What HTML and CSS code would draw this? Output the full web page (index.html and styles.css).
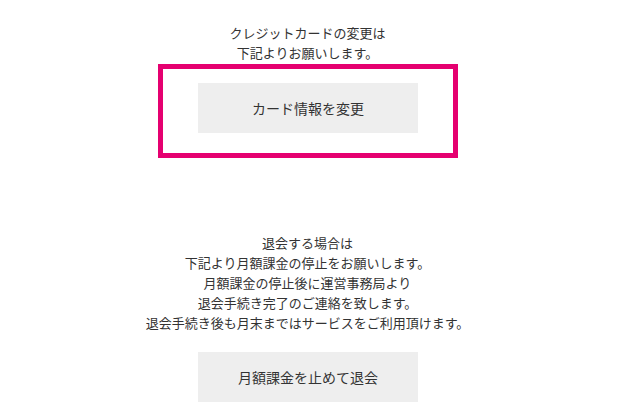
FILE: index.html
```html
<!DOCTYPE html>
<html lang="ja">
<head>
<meta charset="utf-8">
<link rel="stylesheet" href="styles.css">
</head>
<body>
<div class="page">
  <section class="card-section">
    <p class="note">クレジットカードの変更は<br>下記よりお願いします。</p>
    <div class="highlight">
      <a class="btn">カード情報を変更</a>
    </div>
  </section>
  <section class="quit-section">
    <p class="note">退会する場合は<br>下記より月額課金の停止をお願いします。<br>月額課金の停止後に運営事務局より<br>退会手続き完了のご連絡を致します。<br>退会手続き後も月末まではサービスをご利用頂けます。</p>
    <a class="btn btn-quit">月額課金を止めて退会</a>
  </section>
</div>
</body>
</html>
```

FILE: styles.css
```css
html, body {
  margin: 0;
  padding: 0;
  background: #fff;
}
body {
  font-family: "Noto Sans CJK JP", "Noto Sans", sans-serif;
  color: #333;
}
.page {
  width: 615px;
  display: flex;
  flex-direction: column;
  align-items: center;
}
.card-section, .quit-section {
  display: flex;
  flex-direction: column;
  align-items: center;
}
.card-section {
  padding-top: 23px;
}
.note {
  margin: 0;
  font-size: 13px;
  line-height: 20px;
  text-align: center;
}
.highlight {
  margin-top: 1px;
  width: 290px;
  border: 5px solid #e50070;
  padding: 14px 0 20px;
  display: flex;
  justify-content: center;
}
.btn {
  width: 220px;
  height: 50px;
  background: #eeeeee;
  display: flex;
  align-items: center;
  justify-content: center;
  font-size: 14px;
  color: #333;
  text-decoration: none;
  margin-left: 1px;
}
.quit-section {
  margin-top: 75px;
}
.btn-quit {
  margin-top: 19px;
}
```
